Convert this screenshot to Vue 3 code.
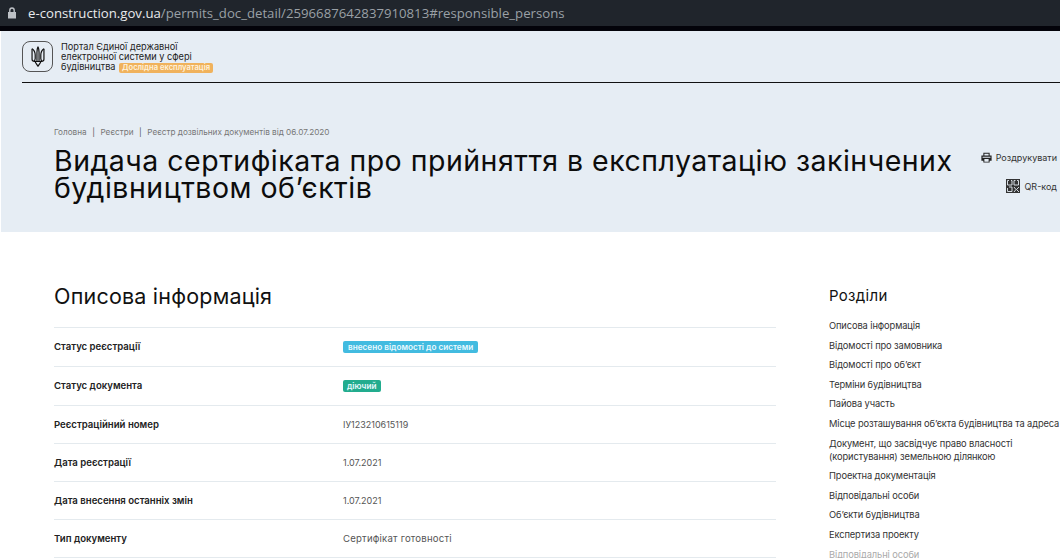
<script setup>
const rows = [
  { label: 'Статус реєстрації', badge: 'внесено відомості до системи', kind: 'blue', h: 39 },
  { label: 'Статус документа', badge: 'діючий', kind: 'green', h: 39 },
  { label: 'Реєстраційний номер', value: 'ІУ123210615119', h: 38 },
  { label: 'Дата реєстрації', value: '1.07.2021', h: 38 },
  { label: 'Дата внесення останніх змін', value: '1.07.2021', h: 38 },
  { label: 'Тип документу', value: 'Сертифікат готовності', wide: true, h: 38 }
]
const links = [
  'Описова інформація', 'Відомості про замовника', 'Відомості про об’єкт', 'Терміни будівництва',
  'Пайова участь', 'Місце розташування об’єкта будівництва та адреса',
  'Документ, що засвідчує право власності (користування) земельною ділянкою',
  'Проектна документація', 'Відповідальні особи', 'Об’єкти будівництва', 'Експертиза проекту'
]
</script>

<template>
  <div class="page">
    <div class="urlbar">
      <svg class="lock" viewBox="0 0 10 12" width="10" height="12"><path fill="#bdc1c6" d="M1 5h8v6.500H1z"/><path fill="none" stroke="#bdc1c6" stroke-width="1.400" d="M2.800 5V3.200a2.200 2.200 0 0 1 4.400 0V5"/></svg>
      <span class="host">e-construction.gov.ua</span><span class="path">/permits_doc_detail/2596687642837910813#responsible_persons</span>
    </div>
    <div class="blackline"></div>
    <header class="hero">
      <div class="top">
        <div class="logo">
          <svg viewBox="0 0 20 30" width="14" height="21">
            <g fill="none" stroke="#111" stroke-width="1.700" stroke-linejoin="round">
              <path d="M10 1c-1.500 3-1.500 5-1.500 8v12M10 1c1.500 3 1.500 5 1.500 8v12"/>
              <path d="M1.500 4v15c0 2 1.500 3 3.500 3h10c2 0 3.500-1 3.500-3V4"/>
              <path d="M1.500 4c3 2 4.500 5 4.500 9v5c0 2-1 3-2 3.500M18.500 4c-3 2-4.500 5-4.500 9v5c0 2 1 3 2 3.500"/>
              <path d="M6 22c0 2 2 3 4 7 2-4 4-5 4-7"/>
            </g>
          </svg>
        </div>
        <div class="brand">
          <div>Портал Єдиної державної</div>
          <div>електронної системи у сфері</div>
          <div>будівництва <span class="pilot">Дослідна експлуатація</span></div>
        </div>
      </div>
      <div class="hero-body">
        <div class="hero-main">
          <nav class="crumbs"><span>Головна</span><i>|</i><span>Реєстри</span><i>|</i><span>Реєстр дозвільних документів від 06.07.2020</span></nav>
          <h1>Видача сертифіката про прийняття в експлуатацію закінчених будівництвом об’єктів</h1>
        </div>
        <div class="actions">
          <div class="action">
            <svg viewBox="0 0 14 14" width="11" height="11"><path fill="#222" fill-rule="evenodd" d="M3 1h8v3.500h2.500V11H11v2.500H3V11H.5V4.500H3zm1.300 1.200v2.300h5.400V2.200zM4.300 9v3.300h5.400V9zM2 6v1.200h10V6z"/></svg>
            <span>Роздрукувати</span>
          </div>
          <div class="action">
            <svg class="qr" viewBox="0 0 14 14" width="14" height="14"><rect width="14" height="14" fill="#333"/><path fill="none" stroke="#e6edf4" stroke-width=".9" d="M3 1.500H1.500V6H6V1.500H5M9.500 1.500H8V6h4.500V1.500H11M1.500 9V12.500H6V8H3M8 8l2 2.500L8 13M13 8l-2.500 2.500L13 13"/></svg>
            <span>QR-код</span>
          </div>
        </div>
      </div>
    </header>
    <main class="content">
      <section class="info">
        <h2>Описова інформація</h2>
        <div class="table">
          <div v-for="r in rows" :key="r.label" class="row" :style="{ height: r.h + 'px' }">
            <div class="label" :class="{ lifted: r.badge }">{{ r.label }}</div>
            <div class="value" :class="{ wide: r.wide }">
              <span v-if="r.badge" class="badge" :class="r.kind">{{ r.badge }}</span>
              <template v-else>{{ r.value }}</template>
            </div>
          </div>
        </div>
      </section>
      <aside class="side">
        <h3>Розділи</h3>
        <ul>
          <li v-for="l in links" :key="l">{{ l }}</li>
          <li class="fade">Відповідальні особи</li>
        </ul>
      </aside>
    </main>
  </div>
</template>

<style>
html, body { margin: 0; background: #fff; overflow: hidden; }
</style>

<style scoped>
.page { width: 1060px; height: 558px; overflow: hidden; font-family: Inter, "Noto Sans", sans-serif; color: #111; }
.urlbar { height: 26px; background: #20252c; display: flex; align-items: center; padding-left: 7px; box-sizing: border-box; font-family: "Open Sans", sans-serif; font-size: 13.200px; white-space: nowrap; }
.lock { margin-right: 11px; }
.host { color: #e8eaed; }
.path { color: #9aa0a6; }
.blackline { height: 5px; background: #03030a; }
.hero { height: 201px; margin-left: 1px; background: #e6edf4; padding-left: 21px; box-sizing: border-box; }
.top { height: 52px; border-bottom: 1px solid #111; display: flex; align-items: flex-start; padding-top: 10px; box-sizing: border-box; }
.logo { width: 31px; height: 31px; box-sizing: border-box; border: 1px solid #555; border-radius: 8px; display: flex; align-items: center; justify-content: center; margin-right: 8px; }
.brand { font-size: 9.200px; line-height: 10px; color: #222; padding-top: 1px; white-space: nowrap; }
.pilot { background: #f0b25c; color: #fff3dc; font-size: 7.600px; font-weight: 600; padding: 0 3px; border-radius: 2px; display: inline-block; line-height: 10px; margin-left: 1px; }
.hero-body { display: flex; justify-content: space-between; padding: 44px 3px 0 32px; }
.crumbs { font-size: 8.200px; color: #777; display: flex; gap: 5.500px; height: 10px; line-height: 10px; white-space: nowrap; }
.crumbs i { font-style: normal; color: #555; }
h1 { margin: 10px 0 0; width: 915px; font-size: 28.500px; line-height: 27px; font-weight: 400; letter-spacing: .49px; color: #0c0c0c; }
.actions { display: flex; flex-direction: column; align-items: flex-end; gap: 15px; padding-top: 23px; font-size: 9px; color: #333; }
.action { display: flex; align-items: center; gap: 4px; height: 14px; white-space: nowrap; }
.content { display: flex; padding: 52px 0 0 54px; }
.info { width: 722px; flex: none; margin-right: 53px; }
h2 { margin: 0 0 19px; font-size: 21.500px; line-height: 24px; font-weight: 400; letter-spacing: .2px; color: #111; }
.table { border-top: 1px solid #e4eaee; }
.row { display: flex; align-items: center; border-bottom: 1px solid #e4eaee; box-sizing: border-box; font-size: 9px; }
.label { width: 289px; font-size: 9.600px; font-weight: 600; color: #222; }
.lifted { margin-bottom: 2px; }
.value { color: #555; }
.wide { font-size: 9.600px; letter-spacing: .2px; }
.badge { display: inline-block; color: #eafaff; font-weight: 600; font-size: 8.200px; line-height: 12px; padding: 0 5px; border-radius: 2px; }
.blue { background: #42bbe0; }
.green { background: #22ac8e; padding: 0 4px; }
.side { width: 231px; flex: none; }
h3 { margin: 2px 0 13px; font-size: 15px; line-height: 20px; font-weight: 400; letter-spacing: .3px; }
ul { list-style: none; margin: 0; padding: 0; width: 231px; }
li { font-size: 9.300px; line-height: 13px; color: #333; margin-bottom: 6.600px; letter-spacing: -.1px; }
.fade { color: #aaa; }
</style>
